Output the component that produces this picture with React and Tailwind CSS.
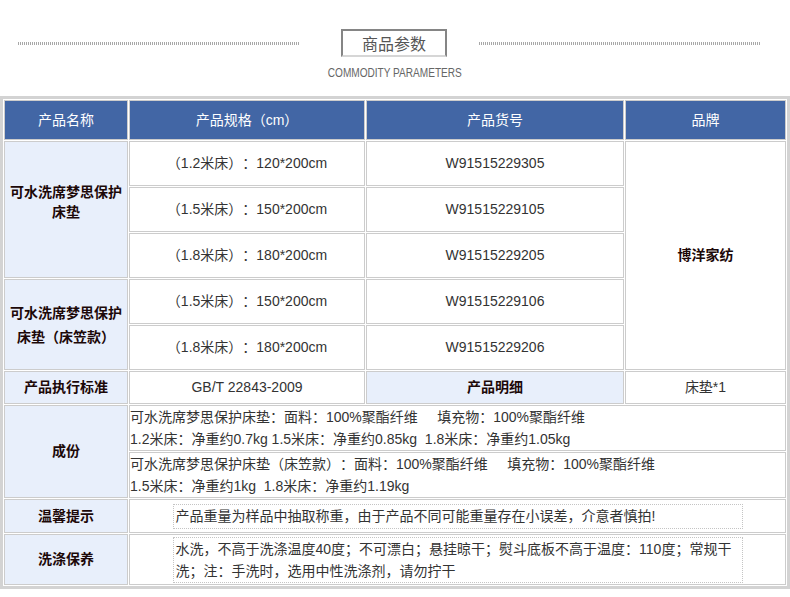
const specRows = [
  { size: '（1.2米床）：120*200cm', code: 'W91515229305' },
  { size: '（1.5米床）：150*200cm', code: 'W91515229105' },
  { size: '（1.8米床）：180*200cm', code: 'W91515229205' },
  { size: '（1.5米床）：150*200cm', code: 'W91515229106' },
  { size: '（1.8米床）：180*200cm', code: 'W91515229206' },
];

const cell = 'border border-[#cccccc]';
const label = 'border border-[#cccccc] bg-[#e8effb] font-bold text-[#1c0808] text-center';

export default function App() {
  return (
    <div className="w-[790px] bg-white font-['Liberation_Sans','Noto_Sans_CJK_SC',sans-serif] text-[14px] text-[#333] [text-spacing-trim:space-all]">
      {/* section title */}
      <div className="h-[96px] pt-[29px]">
        <div className="flex h-[28px] items-center pl-[18px]">
          <div className="h-[3px] w-[282px] bg-[repeating-linear-gradient(90deg,#a8a8a8_0_1px,transparent_1px_2px)]" />
          <div className="ml-[41px] flex h-[28px] w-[106px] items-center justify-center border-2 border-[#858585] border-b-[#d6d6d6] font-['Noto_Sans_CJK_SC',sans-serif] text-[16px] text-[#555]">
            商品参数
          </div>
          <div className="ml-[32px] h-[3px] w-[282px] bg-[repeating-linear-gradient(90deg,#a8a8a8_0_1px,transparent_1px_2px)]" />
        </div>
        <div className="mt-[8px] h-[15px] text-center leading-[15px]">
          <span className="inline-block scale-x-[0.84] text-[12px] text-[#666]">COMMODITY PARAMETERS</span>
        </div>
      </div>

      <table className="w-[790px] table-fixed border-separate border-spacing-[1px] border-[3px] border-[#d3d3d3]">
        <colgroup>
          <col className="w-[124px]" />
          <col className="w-[236px]" />
          <col className="w-[258px]" />
          <col className="w-[161px]" />
        </colgroup>
        <tbody>
          <tr className="h-[40px] bg-[#4266a5] text-center text-[14px] text-white">
            <td className={cell}>产品名称</td>
            <td className={cell}>产品规格（cm）</td>
            <td className={cell}>产品货号</td>
            <td className={cell}>品牌</td>
          </tr>
          {specRows.map((r, i) => (
            <tr key={i} className="h-[45px] text-center">
              {i === 0 && (
                <td rowSpan={3} className={`${label} px-1 pb-4 leading-5`}>
                  可水洗席梦思保护<br />床垫
                </td>
              )}
              {i === 3 && (
                <td rowSpan={2} className={`${label} px-1 leading-6`}>
                  可水洗席梦思保护<br />床垫（床笠款）
                </td>
              )}
              <td className={cell}>{r.size}</td>
              <td className={cell}>{r.code}</td>
              {i === 0 && (
                <td rowSpan={5} className={`${cell} font-bold text-[#1c0808]`}>博洋家纺</td>
              )}
            </tr>
          ))}
          <tr className="h-[33px] text-center">
            <td className={label}>产品执行标准</td>
            <td className={cell}>GB/T 22843-2009</td>
            <td className={label}>产品明细</td>
            <td className={cell}>床垫*1</td>
          </tr>
          <tr className="h-[44px]">
            <td rowSpan={2} className={label}>成份</td>
            <td colSpan={3} className={`${cell} leading-[22px]`}>
              可水洗席梦思保护床垫：面料：100%聚酯纤维&nbsp;&nbsp;&nbsp;&nbsp;&nbsp;填充物：100%聚酯纤维<br />
              1.2米床：净重约0.7kg 1.5米床：净重约0.85kg&nbsp;&nbsp;1.8米床：净重约1.05kg
            </td>
          </tr>
          <tr className="h-[44px]">
            <td colSpan={3} className={`${cell} leading-[22px]`}>
              可水洗席梦思保护床垫（床笠款）：面料：100%聚酯纤维&nbsp;&nbsp;&nbsp;&nbsp;&nbsp;填充物：100%聚酯纤维<br />
              1.5米床：净重约1kg&nbsp;&nbsp;1.8米床：净重约1.19kg
            </td>
          </tr>
          <tr className="h-[34px]">
            <td className={label}>温馨提示</td>
            <td colSpan={3} className={cell}>
              <div className="mx-auto w-[570px] border border-dotted border-[#c4c4c4] px-[2px] leading-[23px]">
                产品重量为样品中抽取称重，由于产品不同可能重量存在小误差，介意者慎拍!
              </div>
            </td>
          </tr>
          <tr className="h-[51px]">
            <td className={label}>洗涤保养</td>
            <td colSpan={3} className={cell}>
              <div className="mx-auto w-[570px] border border-dotted border-[#c4c4c4] px-[2px] leading-[22px]">
                水洗，不高于洗涤温度40度；不可漂白；悬挂晾干；熨斗底板不高于温度：110度；常规干洗；注：手洗时，选用中性洗涤剂，请勿拧干
              </div>
            </td>
          </tr>
        </tbody>
      </table>
    </div>
  );
}
